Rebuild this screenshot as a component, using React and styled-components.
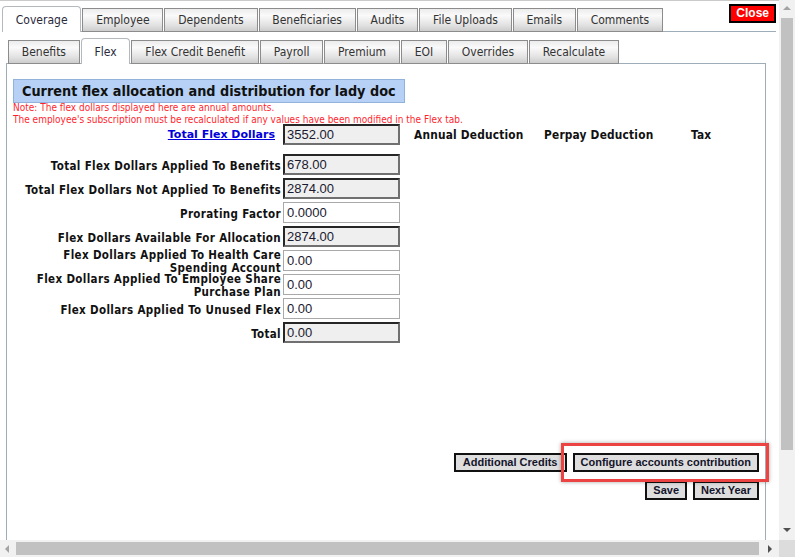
import React from 'react';
import styled, { createGlobalStyle } from 'styled-components';

const GlobalStyle = createGlobalStyle`
  html, body { margin: 0; padding: 0; background: #fff; overflow: hidden; }
  #root { width: 795px; height: 557px; }
`;

const TAHOMA = `"DejaVu Sans Condensed", "DejaVu Sans", sans-serif`;
const VERDANA = `"DejaVu Sans", sans-serif`;
const ARIAL = `"Liberation Sans", Arial, sans-serif`;

const Window = styled.div`
  width: 795px;
  height: 557px;
  display: grid;
  grid-template-columns: 779px 16px;
  grid-template-rows: 540px 17px;
  font-family: ${TAHOMA};
  color: #222;
`;

const Viewport = styled.div`
  box-sizing: border-box;
  overflow: hidden;
  border-top: 1px solid #cacaca;
  padding: 3px 3px 0 2px;
  display: flex;
  flex-direction: column;
`;

const TopBar = styled.div`
  height: 28px;
  display: flex;
  align-items: flex-end;
  margin-bottom: -1px;
  position: relative;
  z-index: 1;
`;

const TabList = styled.div`
  display: flex;
  align-items: flex-end;
  gap: 1px;
  padding-left: ${p => p.$inset || 0}px;
`;

const Tab = styled.div`
  box-sizing: border-box;
  height: ${p => (p.$active ? 26 : 24)}px;
  padding: 0 12.8px;
  display: flex;
  align-items: center;
  justify-content: center;
  font-size: 12px;
  color: ${p => (p.$active ? '#2a2a3a' : '#333')};
  white-space: nowrap;
  border: 1px solid ${p => (p.$active ? '#b4b9bd' : '#8c8c8c')};
  border-bottom: ${p => (p.$active ? 'none' : '1px solid #8c8c8c')};
  border-radius: ${p => (p.$active ? '4px 4px 0 0' : '0')};
  background: ${p =>
    p.$active
      ? '#fff'
      : 'linear-gradient(#ececec, #fafafa 30%, #e4e4e4 70%, #cdcdcd)'};
`;

const CloseButton = styled.button`
  margin: 0 0 0 auto;
  align-self: flex-start;
  box-sizing: border-box;
  height: 19px;
  padding: 0 5px;
  border: 2px solid #000;
  background: #f00;
  color: #fff;
  font: bold 12px ${ARIAL};
  line-height: 13px;
`;

const OuterPanel = styled.div`
  flex: 1;
  display: flex;
  flex-direction: column;
  border-top: 1px solid #9eadb8;
  padding: 6px 10px 0 4px;
`;

const SubBar = styled.div`
  height: 26px;
  display: flex;
  align-items: flex-end;
  margin-bottom: -1px;
  position: relative;
  z-index: 1;
`;

const InnerPanel = styled.div`
  flex: 1;
  display: flex;
  flex-direction: column;
  align-items: flex-start;
  border: 1px solid #9eadb8;
  border-bottom: none;
  padding: 15px 6px 0;
`;

const Heading = styled.div`
  box-sizing: border-box;
  height: 24px;
  display: flex;
  align-items: center;
  padding: 0 8px;
  background: #b6d1f5;
  border: 1px solid #92b2dc;
  font-size: 14.3px;
  font-weight: bold;
  color: #111;
  white-space: nowrap;
`;

const Notes = styled.div`
  color: #ff1f2f;
  font-size: 10px;
  line-height: 12px;
  margin-top: -1px;
  white-space: nowrap;
`;

const Form = styled.div`
  display: flex;
  flex-direction: column;
  gap: 3px;
  margin-top: -2px;
`;

const Row = styled.div`
  display: grid;
  grid-template-columns: 268px 117px auto;
  grid-template-rows: 21px;
  column-gap: 2px;
  align-items: center;
  margin-bottom: ${p => (p.$spaced ? 6 : 0)}px;
`;

const Label = styled.div`
  text-align: right;
  padding-top: 3px;
  font-size: 11.5px;
  letter-spacing: 0.35px;
  font-weight: bold;
  line-height: 13px;
  color: #111;
  white-space: nowrap;
`;

const LinkLabel = styled.a`
  justify-self: end;
  margin-right: 6px;
  font-family: ${VERDANA};
  font-size: 11px;
  font-weight: bold;
  color: #0000dd;
  text-decoration: underline;
`;

const Field = styled.input`
  box-sizing: border-box;
  width: 117px;
  height: 21px;
  margin: 0;
  padding: 0 2px;
  font: 13px ${ARIAL};
  color: #1a1a30;
  outline: none;
  ${p =>
    p.readOnly
      ? `background:#efefef; border:2px solid; border-color:#262626 #707070 #707070 #262626;`
      : `background:#fff; border:1px solid #a9a9a9; padding-left:3px;`}
`;

const Headers = styled.div`
  display: flex;
  padding-left: 12px;
`;

const ColHead = styled.div`
  width: ${p => p.$w}px;
  font-size: 11.8px;
  letter-spacing: 0.2px;
  font-weight: bold;
  color: #111;
  white-space: nowrap;
`;

const Actions = styled.div`
  align-self: stretch;
  display: flex;
  flex-direction: column;
  align-items: flex-end;
  gap: 9px;
  margin-top: 110px;
`;

const ActionRow = styled.div`
  display: flex;
  gap: 6px;
`;

const Button = styled.button`
  box-sizing: border-box;
  height: 19px;
  margin: 0;
  padding: 0 ${p => p.$pad || 6}px;
  border: 2px solid #111;
  background: #dedede;
  color: #14142a;
  font: bold 11px ${ARIAL};
  line-height: 13px;
`;

const Highlight = styled.span`
  position: relative;
  display: inline-flex;
  &::after {
    content: '';
    position: absolute;
    top: -10px;
    bottom: -10px;
    left: -12px;
    right: -10px;
    border: 3px solid #ec4343;
    box-shadow: 0 0 4px rgba(0, 0, 0, 0.35);
    pointer-events: none;
  }
`;

const VScroll = styled.div`
  background: #f1f1f1;
  display: flex;
  flex-direction: column;
  align-items: center;
`;

const HScroll = styled.div`
  background: #f1f1f1;
  display: flex;
  align-items: center;
`;

const Corner = styled.div`
  background: #dcdcdc;
`;

const ArrowBox = styled.div`
  flex: none;
  width: 16px;
  height: ${p => (p.$v ? 18 : 17)}px;
  display: flex;
  align-items: center;
  justify-content: center;
`;

const VThumb = styled.div`
  width: 12px;
  height: 432px;
  background: #c1c1c1;
`;

const HThumb = styled.div`
  width: 743px;
  height: 13px;
  background: #c1c1c1;
`;

const Spacer = styled.div`
  flex: 1;
`;

const Arrow = ({ dir, color }) => {
  const pts = {
    up: '1,6 5,2 9,6',
    down: '1,2 5,6 9,2',
    left: '6,1 2,5 6,9',
    right: '2,1 6,5 2,9',
  }[dir];
  return (
    <svg width="10" height="10" viewBox="0 0 10 10">
      <polygon points={pts} fill={color} />
    </svg>
  );
};

const outerTabs = ['Coverage', 'Employee', 'Dependents', 'Beneficiaries', 'Audits', 'File Uploads', 'Emails', 'Comments'];
const innerTabs = ['Benefits', 'Flex', 'Flex Credit Benefit', 'Payroll', 'Premium', 'EOI', 'Overrides', 'Recalculate'];

const rows = [
  { label: ['Total Flex Dollars Applied To Benefits'], value: '678.00', ro: true },
  { label: ['Total Flex Dollars Not Applied To Benefits'], value: '2874.00', ro: true },
  { label: ['Prorating Factor'], value: '0.0000', ro: false },
  { label: ['Flex Dollars Available For Allocation'], value: '2874.00', ro: true },
  { label: ['Flex Dollars Applied To Health Care', 'Spending Account'], value: '0.00', ro: false },
  { label: ['Flex Dollars Applied To Employee Share', 'Purchase Plan'], value: '0.00', ro: false },
  { label: ['Flex Dollars Applied To Unused Flex'], value: '0.00', ro: false },
  { label: ['Total'], value: '0.00', ro: true },
];

export default function App() {
  return (
    <>
      <GlobalStyle />
      <Window>
        <Viewport>
          <TopBar>
            <TabList>
              {outerTabs.map(t => (
                <Tab key={t} $active={t === 'Coverage'}>{t}</Tab>
              ))}
            </TabList>
            <CloseButton>Close</CloseButton>
          </TopBar>
          <OuterPanel>
            <SubBar>
              <TabList $inset={2}>
                {innerTabs.map(t => (
                  <Tab key={t} $active={t === 'Flex'}>{t}</Tab>
                ))}
              </TabList>
            </SubBar>
            <InnerPanel>
              <Heading>Current flex allocation and distribution for lady doc</Heading>
              <Notes>
                Note: The flex dollars displayed here are annual amounts.<br />
                The employee's subscription must be recalculated if any values have been modified in the Flex tab.
              </Notes>
              <Form>
                <Row $spaced>
                  <LinkLabel href="#">Total Flex Dollars</LinkLabel>
                  <Field readOnly defaultValue="3552.00" />
                  <Headers>
                    <ColHead $w={130}>Annual Deduction</ColHead>
                    <ColHead $w={147}>Perpay Deduction</ColHead>
                    <ColHead $w={40}>Tax</ColHead>
                  </Headers>
                </Row>
                {rows.map(r => (
                  <Row key={r.label.join(' ')}>
                    <Label>
                      {r.label.map((l, i) => (
                        <React.Fragment key={l}>
                          {i > 0 && <br />}
                          {l}
                        </React.Fragment>
                      ))}
                    </Label>
                    <Field readOnly={r.ro} defaultValue={r.value} />
                  </Row>
                ))}
              </Form>
              <Actions>
                <ActionRow>
                  <Button $pad={7}>Additional Credits</Button>
                  <Highlight>
                    <Button>Configure accounts contribution</Button>
                  </Highlight>
                </ActionRow>
                <ActionRow>
                  <Button $pad={6}>Save</Button>
                  <Button>Next Year</Button>
                </ActionRow>
              </Actions>
            </InnerPanel>
          </OuterPanel>
        </Viewport>
        <VScroll>
          <ArrowBox $v><Arrow dir="up" color="#a3a3a3" /></ArrowBox>
          <VThumb />
          <Spacer />
          <ArrowBox $v><Arrow dir="down" color="#505050" /></ArrowBox>
        </VScroll>
        <HScroll>
          <ArrowBox><Arrow dir="left" color="#a3a3a3" /></ArrowBox>
          <HThumb />
          <Spacer />
          <ArrowBox><Arrow dir="right" color="#505050" /></ArrowBox>
        </HScroll>
        <Corner />
      </Window>
    </>
  );
}
